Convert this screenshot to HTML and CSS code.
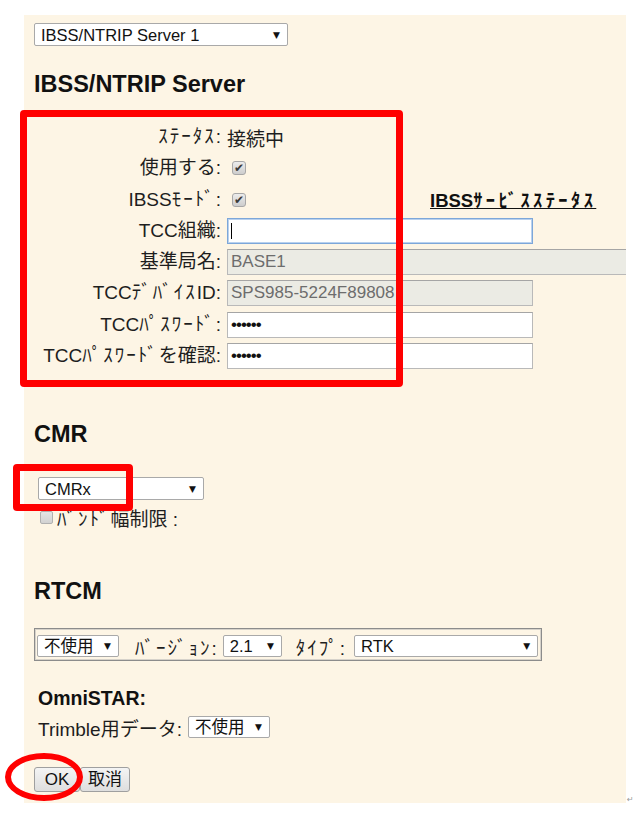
FILE: index.html
```html
<!doctype html>
<html lang="ja">
<head>
	<meta charset="UTF-8">
	<title>IBSS/NTRIP Server</title>
	<link rel="stylesheet" href="styles.css">
</head>
<body>
<div class="shot">
	<div class="sheet">
		<span class="sel sel-server"><select><option>IBSS/NTRIP Server 1</option></select></span>

		<h3 class="h-server">IBSS/NTRIP Server</h3>
		<div class="form">
			<label><span class="kana">ｽﾃｰﾀｽ</span>:</label>
			<div class="val">接続中</div>

			<label>使用する:</label>
			<div class="val"><span class="chk">✔</span></div>

			<label>IBSS<span class="kana">ﾓｰﾄﾞ</span>:</label>
			<div class="val"><span class="chk">✔</span><a class="svc" href="javascript:;">IBSS<span class="kana">ｻｰﾋﾞｽｽﾃｰﾀｽ</span></a></div>

			<label>TCC組織:</label>
			<div class="val"><span class="focus"><input class="txt" type="text" value=""></span></div>

			<label>基準局名:</label>
			<div class="val"><input class="txt wide" type="text" value="BASE1" disabled></div>

			<label>TCC<span class="kana">ﾃﾞﾊﾞｲｽ</span>ID:</label>
			<div class="val"><input class="txt" type="text" value="SPS985-5224F89808" disabled></div>

			<label>TCC<span class="kana">ﾊﾟｽﾜｰﾄﾞ</span>:</label>
			<div class="val"><input class="txt" type="password" value="secret"></div>

			<label>TCC<span class="kana">ﾊﾟｽﾜｰﾄﾞ</span>を確認:</label>
			<div class="val"><input class="txt" type="password" value="secret"></div>
		</div>

		<h3 class="h-cmr">CMR</h3>
		<span class="sel sel-cmr"><select><option>CMRx</option></select></span>
		<div class="band"><span class="chk off"></span><span class="band-text"><span class="kana">ﾊﾞﾝﾄﾞ</span>幅制限 :</span></div>

		<h3 class="h-rtcm">RTCM</h3>
		<div class="rtcm">
			<span class="sel sel-use"><select><option>不使用</option></select></span>
			<span class="rtcm-label lbl-ver"><span class="kana">ﾊﾞｰｼﾞｮﾝ</span>:</span>
			<span class="sel sel-ver"><select><option>2.1</option></select></span>
			<span class="rtcm-label lbl-type"><span class="kana">ﾀｲﾌﾟ</span>:</span>
			<span class="sel sel-type"><select><option>RTK</option></select></span>
		</div>

		<div class="omni">OmniSTAR:</div>
		<div class="trimble">
			<span>Trimble用データ:</span>
			<span class="sel sel-trimble"><select><option>不使用</option></select></span>
		</div>

		<div class="buttons">
			<button class="btn btn-ok">OK</button><button class="btn btn-cancel">取消</button>
		</div>
	</div>
	<span class="ret">↵</span>

	<!-- 注記 -->
	<div class="mark box1"></div>
	<div class="mark box2"></div>
	<div class="mark ring"></div>
</div>
</body>
</html>
```

FILE: styles.css
```css
*{margin:0; padding:0;}
body{
	background:#fff;
	font-family:"Liberation Sans","Noto Sans CJK JP",sans-serif;
	color:#1e1e1e;
}

.shot{
	position:relative;
	display:flex;
	align-items:flex-end;
	padding:15px 0 0 24px;
}
.sheet{
	width:602px;
	height:788px;
	box-sizing:border-box;
	padding:8px 0 0 10px;
	background:#fdf5e5;
}
.ret{font:8px/1 "DejaVu Sans",sans-serif; color:#999; margin:0 0 -1px 1px;}

.kana{letter-spacing:2px;}

/* select */
.sel{
	position:relative;
	display:block;
	height:23px;
}
.sel select{
	-webkit-appearance:none;
	appearance:none;
	width:100%;
	height:100%;
	box-sizing:border-box;
	border:1px solid #a9a9a9;
	border-radius:2px;
	background:#fff;
	padding:0 0 0 6px;
	font:16.5px "Liberation Sans","Noto Sans CJK JP",sans-serif;
	color:#111;
}
.sel:after{
	content:"▼";
	position:absolute;
	right:8px;
	top:50%;
	transform:translateY(-50%);
	font:9px "DejaVu Sans",sans-serif;
	color:#111;
	pointer-events:none;
}
.sel-server{width:254px;}
.sel-cmr{width:166px; margin:29px 0 0 4px;}

/* headings */
h3{font:bold 23.5px/28px "Liberation Sans",sans-serif; color:#111;}
.h-server{margin-top:24px;}
.h-cmr{margin-top:51px;}
.h-rtcm{margin-top:49px;}

/* server form */
.form{
	display:grid;
	grid-template-columns:187px 1fr;
	grid-auto-rows:26px;
	column-gap:6px;
	row-gap:5.3px;
	margin-top:26px;
}
.form label{
	text-align:right;
	font-size:19px;
	line-height:26px;
	white-space:nowrap;
}
.val{
	display:flex;
	align-items:center;
	font-size:19px;
	white-space:nowrap;
}
.chk{
	display:inline-flex;
	align-items:center;
	justify-content:center;
	width:14px;
	height:14px;
	box-sizing:border-box;
	margin-left:5px;
	border:1px solid #a7a7a7;
	border-radius:3px;
	background:linear-gradient(#ececec,#cdcdcd);
	font:bold 12px/1 "DejaVu Sans",sans-serif;
	color:#3a3a3a;
}
.svc{
	margin-left:184px;
	margin-top:-2px;
	font-weight:bold;
	font-size:18.5px;
	color:#111;
	text-decoration:underline;
}
.svc .kana{letter-spacing:3.4px;}

.txt{
	width:306px;
	height:26px;
	box-sizing:border-box;
	border:1px solid #b9b9b9;
	border-top-color:#a5a5a5;
	padding:0 3px;
	background:#fff;
	font:17px "Liberation Sans",sans-serif;
	color:#111;
}
.txt:disabled{background:#ebebe4; color:#6d6d6d;}
.txt.wide{width:399px; border-right:none;}
.txt[type=password]{letter-spacing:-1px;}

.focus{position:relative; display:block;}
.focus .txt{border:1px solid #7da7d9; box-shadow:0 0 0 1px #b9d1ee inset;}
.focus:before{
	content:"";
	position:absolute;
	left:4px;
	top:5px;
	width:1px;
	height:16px;
	background:#000;
}

/* CMR */
.band{
	display:flex;
	align-items:center;
	height:22px;
	margin:6px 0 0 6px;
	font-size:19px;
}
.band .chk{margin:0; width:13px; height:13px; border-radius:2px; border-color:#b0b0b0; background:linear-gradient(#e4e4e4,#d2d2d2);}
.band-text{margin-left:4px; white-space:nowrap;}

/* RTCM */
.rtcm{
	display:flex;
	align-items:center;
	width:508px;
	height:33px;
	box-sizing:border-box;
	margin-top:23px;
	padding:3px 2px 0;
	border:1px solid #8c8c8c;
	box-shadow:inset 0 0 0 1px #d6d2ca;
	font-size:19px;
}
.rtcm .sel{height:22px;}
.sel-use{width:82px;}
.sel-ver{width:59px; margin-left:6px;}
.sel-type{width:184px; margin-left:9px;}
.rtcm-label{white-space:nowrap;}
.lbl-ver{margin-left:16px;}
.lbl-type{margin-left:14px;}

/* OmniSTAR */
.omni{
	margin:25px 0 0 4px;
	font:bold 19.5px/24px "Liberation Sans",sans-serif;
	color:#111;
}
.trimble{
	display:flex;
	align-items:center;
	height:22px;
	margin:6px 0 0 4px;
	font-size:19px;
	white-space:nowrap;
}
.sel-trimble{width:82px; height:22px; margin-left:6px;}

/* buttons */
.buttons{display:flex; margin-top:29px;}
.btn{
	height:25px;
	box-sizing:border-box;
	border:1px solid #9f9f9f;
	border-radius:3px;
	background:linear-gradient(#f4f4f4,#dedede);
	font:17px/1 "Liberation Sans","Noto Sans CJK JP",sans-serif;
	color:#111;
}
.btn-ok{width:46px;}
.btn-cancel{width:50px;}

/* red marks */
.mark{
	position:absolute;
	box-sizing:border-box;
	border:7px solid #f00;
	border-radius:4px;
}
.box1{left:20px; top:110px; width:383px; height:277px;}
.box2{left:13px; top:464px; width:120px; height:47px;}
.ring{left:5px; top:753px; width:78px; height:48px; border-width:6px; border-radius:50%;}
```
